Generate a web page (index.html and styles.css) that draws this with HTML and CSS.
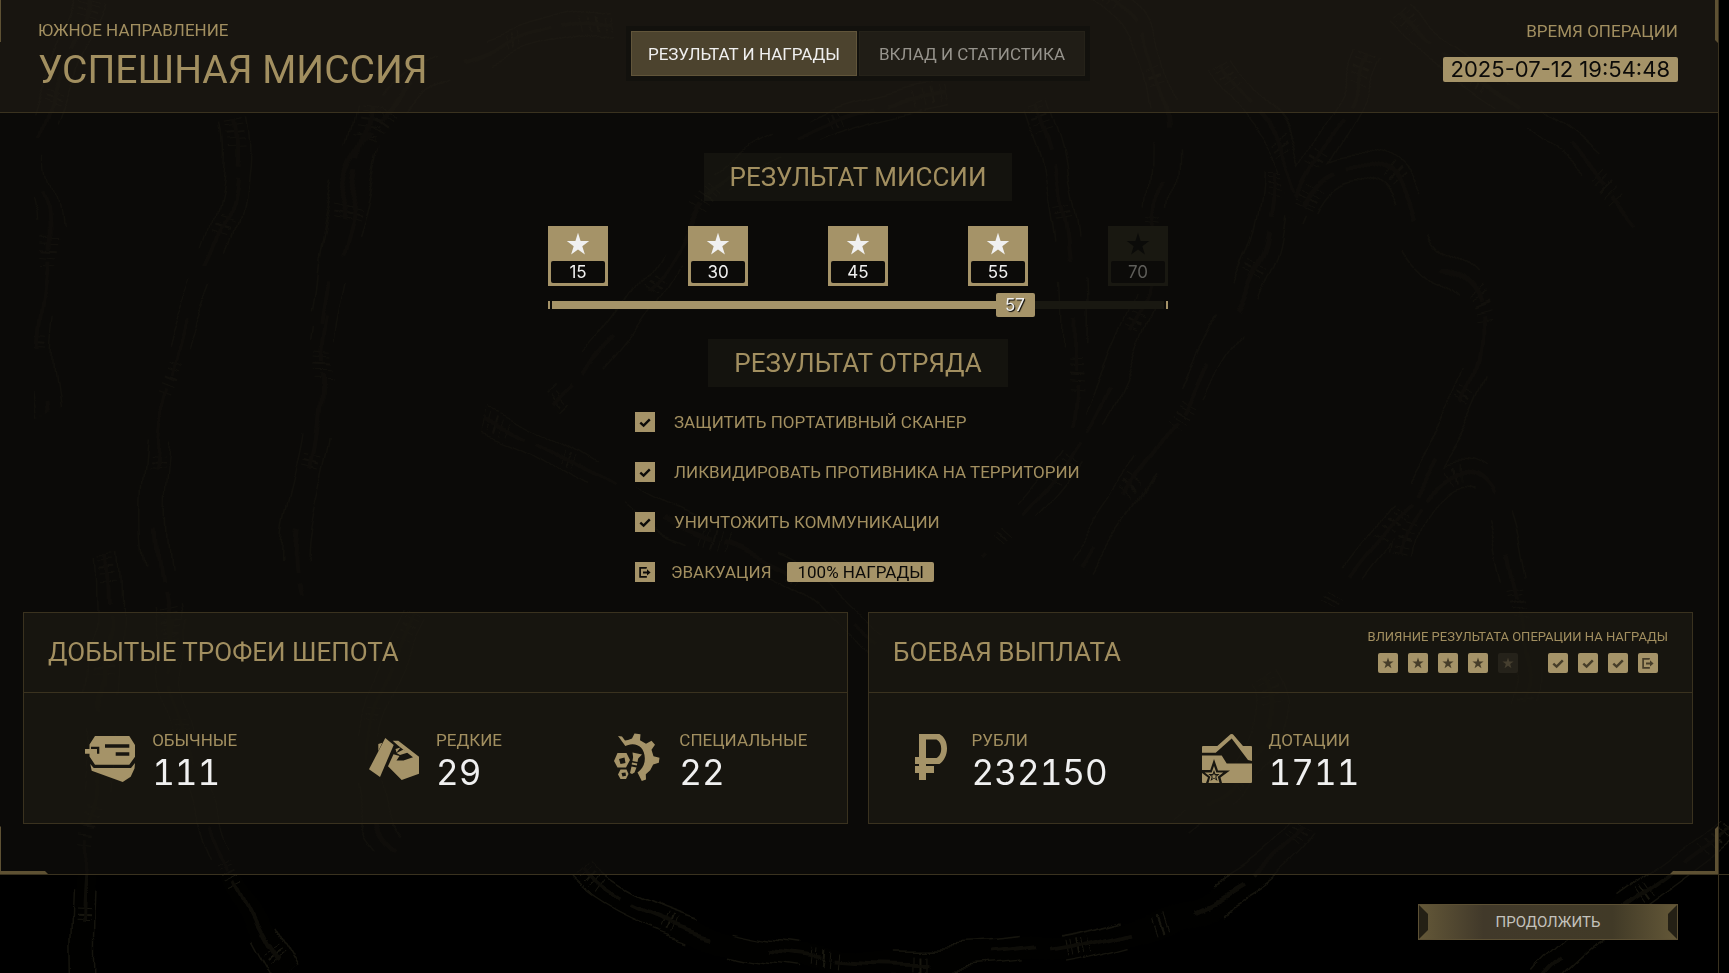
FILE: index.html
```html
<!DOCTYPE html>
<html lang="ru">
<head>
<meta charset="utf-8">
<title>Успешная миссия</title>
<meta name="viewport" content="width=device-width, initial-scale=1">
<link rel="stylesheet" href="styles.css">
</head>
<body>
<svg class="symbols" aria-hidden="true">
  <symbol id="star" viewBox="0 0 24 24"><path d="M12 .8l2.6 8.3h8.6l-6.9 5.1 2.6 8.4L12 17.4l-6.9 5.2 2.6-8.4L.8 9.1h8.6z"/></symbol>
  <symbol id="check" viewBox="0 0 20 20"><path d="M5.3 10.6l3.300 3 6.200-6.200" fill="none" stroke="currentColor" stroke-width="2.4"/></symbol>
  <symbol id="exit" viewBox="0 0 20 20"><path d="M11 6.6V5.9H5.1v8.9H11v-.8" fill="none" stroke="currentColor" stroke-width="1.7"/><path d="M8 9.4h4V7.2l3.6 3.2-3.6 3.2v-2.2H8z"/></symbol>
</svg>

<svg class="backdrop" viewBox="0 0 1729 973" preserveAspectRatio="xMidYMid slice" aria-hidden="true">
  <defs>
    <filter id="warp" x="0" y="0" width="100%" height="100%" color-interpolation-filters="sRGB">
      <feTurbulence type="fractalNoise" baseFrequency=".011" numOctaves="2" seed="4"/>
      <feDisplacementMap in="SourceGraphic" scale="34" xChannelSelector="R" yChannelSelector="G"/>
      <feGaussianBlur stdDeviation=".7"/>
    </filter>
    <g id="tubes">
      <path d="M610 20C500 40 420 70 380 120S330 240 320 330"/>
      <path d="M940 92C820 120 740 150 700 210S640 330 560 400"/>
      <path d="M1100 -10C1160 40 1168 100 1164 180S1150 290 1110 380 1050 480 980 560"/>
      <path d="M1305 205C1330 150 1390 150 1410 215S1490 270 1484 340 1440 440 1420 480 1360 560 1320 620"/>
      <path d="M1400 20C1470 90 1560 120 1640 220"/>
      <path d="M1220 60C1260 120 1300 150 1300 200"/>
      <path d="M1372 60C1340 130 1310 160 1290 220"/>
      <path d="M1276 170C1276 280 1220 330 1180 410S1110 520 1080 570"/>
      <path d="M1400 560C1420 450 1490 450 1505 540S1530 640 1525 700"/>
      <path d="M1040 110C1080 220 1080 320 1070 420"/>
      <path d="M90 0C60 80 20 140 40 200S20 330 40 420"/>
      <path d="M370 110C350 220 320 300 320 390S280 520 300 600"/>
      <path d="M230 120C250 220 170 330 160 420S150 560 170 640"/>
      <path d="M105 560C115 700 80 800 84 980"/>
      <path d="M170 620C170 740 220 860 290 980"/>
      <path d="M420 620C380 700 330 780 400 850"/>
      <path d="M580 870C700 990 1180 1000 1300 830"/>
      <path d="M480 420C560 440 600 500 720 540S820 600 880 640"/>
      <path d="M1729 830C1640 900 1580 930 1540 980"/>
      <path d="M1260 680C1300 740 1220 800 1180 830"/>
    </g>
  </defs>
  <g filter="url(#warp)">
    <use href="#tubes" class="tube-rim"/>
    <use href="#tubes" class="tube-core"/>
    <use href="#tubes" class="tube-rings"/>
    <use href="#tubes" class="tube-vein"/>
  </g>
</svg>

<div class="frame">
  <div class="shell">
    <i class="corner corner-tl"></i><i class="corner corner-tr"></i>
    <i class="corner corner-bl"></i><i class="corner corner-br"></i>

    <header class="top">
      <div class="top-title">
        <p class="label">ЮЖНОЕ НАПРАВЛЕНИЕ</p>
        <h1>УСПЕШНАЯ МИССИЯ</h1>
      </div>
      <nav class="tabs">
        <button type="button" class="tab tab-active">РЕЗУЛЬТАТ И НАГРАДЫ</button>
        <button type="button" class="tab">ВКЛАД И СТАТИСТИКА</button>
      </nav>
      <div class="top-time">
        <p class="label">ВРЕМЯ ОПЕРАЦИИ</p>
        <time class="stamp" datetime="2025-07-12T19:54:48">2025-07-12 19:54:48</time>
      </div>
    </header>

    <main>
      <section class="mission">
        <h2 class="plate">РЕЗУЛЬТАТ МИССИИ</h2>
        <div class="scale">
          <ol class="stars">
            <li class="goal"><svg><use href="#star"/></svg><span>15</span></li>
            <li class="goal"><svg><use href="#star"/></svg><span>30</span></li>
            <li class="goal"><svg><use href="#star"/></svg><span>45</span></li>
            <li class="goal"><svg><use href="#star"/></svg><span>55</span></li>
            <li class="goal goal-off"><svg><use href="#star"/></svg><span>70</span></li>
          </ol>
          <div class="bar" role="progressbar" aria-label="Результат миссии" aria-valuenow="57" aria-valuemin="0" aria-valuemax="70">
            <div class="bar-fill" style="width:72%"></div>
            <span class="bar-value">57</span>
            <div class="bar-rest"></div>
          </div>
        </div>
      </section>

      <section class="squad">
        <h2 class="plate">РЕЗУЛЬТАТ ОТРЯДА</h2>
        <ul class="tasks">
          <li><svg class="mark"><use href="#check"/></svg><span>ЗАЩИТИТЬ ПОРТАТИВНЫЙ СКАНЕР</span></li>
          <li><svg class="mark"><use href="#check"/></svg><span>ЛИКВИДИРОВАТЬ ПРОТИВНИКА НА ТЕРРИТОРИИ</span></li>
          <li><svg class="mark"><use href="#check"/></svg><span>УНИЧТОЖИТЬ КОММУНИКАЦИИ</span></li>
          <li class="evac"><svg class="mark"><use href="#exit"/></svg><span>ЭВАКУАЦИЯ</span><strong class="bonus">100% НАГРАДЫ</strong></li>
        </ul>
      </section>

      <div class="cards">
        <section class="card">
          <header class="card-head"><h2>ДОБЫТЫЕ ТРОФЕИ ШЕПОТА</h2></header>
          <div class="card-body">
            <div class="item">
              <svg class="icon" viewBox="0 0 50 50"><path d="M10 3h34.300l5.700 9v11.700l-5.700 8H10L4.500 23.500v-2.800H0V16h4.500v-4.500z"/><path d="M5.300 31l3.400 4H46l4-5-.5 5.500-3.800 8.200L37.700 49l-31-11.300z"/><path class="cut" d="M20 11.300h24.300v3.400H20zM30.700 19.300h13.600v3.400H30.700zM6 13.700h8.300v7H12V16H6z"/></svg>
              <p><span class="label">ОБЫЧНЫЕ</span><b>111</b></p>
            </div>
            <div class="item">
              <svg class="icon" viewBox="0 0 50 50"><path d="M16.300 5l8.400 7L11 44 0 36.300z"/><path d="M9.300 11l4-1.300L9.300 18z"/><path d="M23.700 7.700h5.600L50 23.700v17L32.700 47 19 33.300l5.500-12 6 1.700-3 4.500h7l9.500-3.300L29 12.500z"/><path d="M26.500 16l5-1.500-4 5zM27.500 20l7-3.500 4.500 3-8 2.500z"/></svg>
              <p><span class="label">РЕДКИЕ</span><b>29</b></p>
            </div>
            <div class="item">
              <svg class="icon" viewBox="0 0 50 50"><path d="M6 3l4 .5 3 4 3-.5 4-1.500L22.500.500l6 .8-.5 6 6 3.500 5.500-3 3.500 4-3.500 5 2 6.500 6 1.500-.7 5-5.600 1.800-3 5.600-4.400 4 .2 5.300-4.200 1.500-4.300-8.500c5-4 7.500-8 7.300-14.500C32.700 16 27 11 20.300 11.200c-3 .2-5.300.9-7 1.900C11.300 10 9 7 6 3z"/><path fill-rule="evenodd" d="M5.500 20h9l3.500 7-4 7.500H5.500L2 28zM7 26l1.500 5 5-1-1-5.500z"/><path fill-rule="evenodd" d="M8.500 36.500h6l2 4.500-2.500 5h-5.500L6 41.500zM9.500 40l1 3.500 3.500-.8-.5-3.200z"/><path d="M20.500 19.500l9.500 2-3.800 4-.7 3.500-5-1 .6-4zM20 29.500l5.200 1-.3 2-5.200-1zM19.500 33.500l5 1-2 5-2.500 1.500-2-1z"/></svg>
              <p><span class="label">СПЕЦИАЛЬНЫЕ</span><b>22</b></p>
            </div>
          </div>
        </section>

        <section class="card">
          <header class="card-head">
            <h2>БОЕВАЯ ВЫПЛАТА</h2>
            <div class="influence">
              <p>ВЛИЯНИЕ РЕЗУЛЬТАТА ОПЕРАЦИИ НА НАГРАДЫ</p>
              <div class="chips">
                <svg class="chip chip-star"><use href="#star"/></svg>
                <svg class="chip chip-star"><use href="#star"/></svg>
                <svg class="chip chip-star"><use href="#star"/></svg>
                <svg class="chip chip-star"><use href="#star"/></svg>
                <svg class="chip chip-star chip-off"><use href="#star"/></svg>
                <span class="chips-break"></span>
                <svg class="chip"><use href="#check"/></svg>
                <svg class="chip"><use href="#check"/></svg>
                <svg class="chip"><use href="#check"/></svg>
                <svg class="chip"><use href="#exit"/></svg>
              </div>
            </div>
          </header>
          <div class="card-body">
            <div class="item">
              <svg class="icon" viewBox="0 0 50 50"><path fill-rule="evenodd" d="M14 1h20.500c5 3 7.500 8 7.500 14.500S39 28 34.500 31H21v2h8v7h-8v7h-7v-7h-4v-7h4v-2h-4v-7h4zM21 6.500V25h10.500c3.500-2 4.700-5.500 4.700-9.500s-1.200-7-4.700-9z"/></svg>
              <p><span class="label">РУБЛИ</span><b>232150</b></p>
            </div>
            <div class="item">
              <svg class="icon" viewBox="0 0 50 50"><path d="M1 13h14.300L28.500 1.300q1.200-.8 2.400 0L41 13h8q1 0 1 1v14l-4-1L29.700 5.500l-16 14.200H0V14q0-1 1-1z"/><path d="M0 22.500h19.700l5 8H50V49q0 1-1 1H1q-1 0-1-1z"/><path class="cut" d="M12 26l4 11.500h12l-9.500 7L20 50H4l2-5.500-6-4.500v-3h8.300z"/><path d="M12 33l2.300 6.500h7l-5.500 4.300L17.500 50h-11l1.800-6.200L2.700 39.500h7z"/><path class="cut" d="M12 37l1.500 4h4.200l-3.400 2.700L15.500 48 12 45.600 8.500 48l1.200-4.300L6.300 41h4.200z"/><path d="M12 40.500l.8 2h2l-1.600 1.300.6 2.200-1.800-1.200L10.200 46l.6-2.200-1.600-1.300h2z"/></svg>
              <p><span class="label">ДОТАЦИИ</span><b>1711</b></p>
            </div>
          </div>
        </section>
      </div>
    </main>
  </div>

  <footer class="bottom">
    <button type="button" class="continue">ПРОДОЛЖИТЬ</button>
  </footer>
</div>
</body>
</html>
```
FILE: styles.css
```css
:root {
  --gold: #a59368;
  --gold-text: #a28f60;
  --line: #3a321f;
  --corner: #5e5133;
  --ink: #0c0b09;
  --white: #f0f0f0;
  --digits: Inter, sans-serif;
}

* { box-sizing: border-box; }

body {
  margin: 0;
  background: #000;
  color: var(--gold-text);
  font-family: Roboto, "Open Sans", sans-serif;
  font-weight: 400;
  font-size: 17px;
  line-height: 20px;
  overflow-x: hidden;
}

h1, h2, p, ul, ol { margin: 0; padding: 0; font-weight: 400; }
ul, ol { list-style: none; }
svg { display: block; fill: currentColor; }
button { font: inherit; cursor: pointer; }

.symbols { position: absolute; width: 0; height: 0; }

.backdrop {
  position: fixed;
  inset: 0;
  z-index: -1;
  width: 100%;
  height: 100%;
  fill: none;
}
.tube-rim { stroke: #15140d; stroke-width: 27; stroke-dasharray: 130 40 70 90; }
.tube-core { stroke: #010100; stroke-width: 24; }
.tube-rings { stroke: #18170f; stroke-width: 17; stroke-dasharray: 1 4 1 6 2 5 1 7 1 70 1 5 2 4 1 140; }
.tube-vein { stroke: #0e0d08; stroke-width: 4; stroke-dasharray: 50 12 90 60; }

.frame {
  min-height: 100vh;
  margin-right: 10px;
  border-right: 1px solid var(--line);
  display: flex;
  flex-direction: column;
}

.shell {
  position: relative;
  flex: 1;
  background: rgba(15, 14, 12, 0.7);
}

.corner { position: absolute; width: 48px; height: 48px; border: 0 solid var(--corner); }
.corner-tl { left: 0; top: -6px; border-left-width: 1px; }
.corner-tr { right: 0; top: -5px; border-right-width: 3px; clip-path: polygon(0 0, 100% 0, 100% 100%, 45px 45px); }
.corner-bl { left: 0; bottom: 0; border-left-width: 1px; border-bottom-width: 3px; clip-path: polygon(0 0, 45px 45px, 48px 48px, 0 48px); }
.corner-br { right: 0; bottom: 0; border-right-width: 3px; border-bottom-width: 3px; clip-path: polygon(48px 0, 45px 3px, 45px 45px, 3px 45px, 0 48px, 48px 48px); }

.top {
  display: grid;
  grid-template-columns: 1fr auto 1fr;
  align-items: start;
  padding: 20px 40px 14px 38px;
  border-bottom: 1px solid var(--line);
  background: rgba(42, 39, 28, 0.42);
}
h1 { padding-top: 2px; font-size: 39px; line-height: 56px; }
.top-time { display: flex; flex-direction: column; align-items: flex-end; gap: 16px; padding-top: 1px; }
.stamp {
  padding: 0 8px;
  border-radius: 2px;
  background: var(--gold);
  color: var(--ink);
  font-family: var(--digits);
  font-size: 22px;
  line-height: 25px;
}

.tabs { display: flex; gap: 2px; padding: 5px; margin-top: 6px; background: #12110d; }
.tab {
  width: 226px;
  height: 45px;
  padding: 0;
  border: 1px solid #252219;
  background: #201d16;
  color: #96938c;
}
.tab-active { border-color: #61553a; background: #4c432e; color: var(--white); }

.mission, .squad { display: flex; flex-direction: column; align-items: center; padding-right: 2px; }
.mission { padding-top: 40px; }
.plate {
  padding: 0 26px;
  background: rgba(38, 36, 26, 0.35);
  font-size: 26px;
  line-height: 48px;
}

.scale { width: 620px; margin-top: 25px; }
.stars { display: flex; justify-content: space-between; }
.goal {
  width: 60px;
  height: 60px;
  padding: 6px 3px 3px;
  background: var(--gold);
  color: var(--white);
  text-align: center;
}
.goal svg { width: 24px; height: 24px; margin: 0 auto 5px; }
.goal span {
  display: block;
  border-radius: 2px;
  background: var(--ink);
  font-family: var(--digits);
  line-height: 22px;
}
.goal-off { background: #191811; color: #0b0b09; }
.goal-off span { color: #5f5e5a; }

.bar {
  display: flex;
  align-items: center;
  height: 24px;
  margin-top: 7px;
  padding: 0 2px;
  background:
    linear-gradient(var(--gold), var(--gold)) left / 2px 8px no-repeat,
    linear-gradient(var(--gold), var(--gold)) right / 2px 8px no-repeat;
}
.bar-fill { height: 8px; margin-left: 2px; background: var(--gold); }
.bar-rest { flex: 1; height: 8px; margin-right: 2px; background: #191811; }
.bar-value {
  width: 39px;
  border-radius: 2px;
  background: var(--gold);
  color: var(--white);
  font-family: var(--digits);
  line-height: 24px;
  text-align: center;
  text-shadow: 1px 1px 1px #000;
}

.squad { margin-top: 22px; }
.tasks { display: grid; gap: 30px; width: 446px; margin-top: 25px; }
.tasks li { display: flex; align-items: center; gap: 19px; white-space: nowrap; }
.tasks .evac { gap: 16px; }
.mark { width: 20px; height: 20px; background: var(--gold); color: var(--ink); }
.bonus { padding: 0 10px; border-radius: 2px; background: var(--gold); color: var(--ink); font-weight: 400; }

.cards {
  display: grid;
  grid-template-columns: 1fr 1fr;
  gap: 20px;
  margin: 30px 25px 50px 23px;
}
.card { border: 1px solid var(--line); background: rgba(30, 28, 20, 0.65); }
.card-head {
  display: flex;
  justify-content: space-between;
  min-height: 80px;
  padding: 0 24px;
  border-bottom: 1px solid var(--line);
}
.card-head h2 { font-size: 26px; line-height: 79px; }
.influence { padding-top: 14px; }
.influence p { font-size: 13px; line-height: 20px; }
.chips { display: flex; gap: 10px; justify-content: center; margin-top: 6px; }
.chips-break { width: 10px; }
.chip { width: 20px; height: 20px; border-radius: 2px; background: var(--gold); color: #463d29; }
.chip-star { padding: 4px; }
.chip-off { background: #25221a; color: #463f2f; }

.card-body { display: grid; grid-template-columns: repeat(3, 1fr); padding: 36px 0 30px; }
.item { display: flex; justify-content: center; gap: 17px; }
.icon { width: 50px; height: 50px; margin-top: 4px; color: var(--gold); overflow: hidden; }
.cut { fill: #181610; }
.item .label { display: block; line-height: 22px; }
.item b {
  display: block;
  color: var(--white);
  font-family: var(--digits);
  font-size: 35px;
  font-variant-numeric: tabular-nums;
  line-height: 42px;
  font-weight: 400;
}

.bottom {
  display: flex;
  justify-content: flex-end;
  margin-right: -11px;
  padding: 29px 51px 33px;
  border-top: 1px solid var(--line);
}
.continue {
  position: relative;
  width: 260px;
  height: 36px;
  border: 1px solid #5c5034;
  background: linear-gradient(90deg, #645838, #41392a 25%, #413a27 75%, #645838);
  color: #c4c2bc;
  font-size: 15px;
}
.continue::before, .continue::after {
  content: "";
  position: absolute;
  top: 0;
  width: 9px;
  height: 34px;
  background: #242015;
}
.continue::before { left: 0; clip-path: polygon(0 0, 100% 9px, 100% 25px, 0 100%); }
.continue::after { right: 0; clip-path: polygon(100% 0, 0 9px, 0 25px, 100% 100%); }
```
